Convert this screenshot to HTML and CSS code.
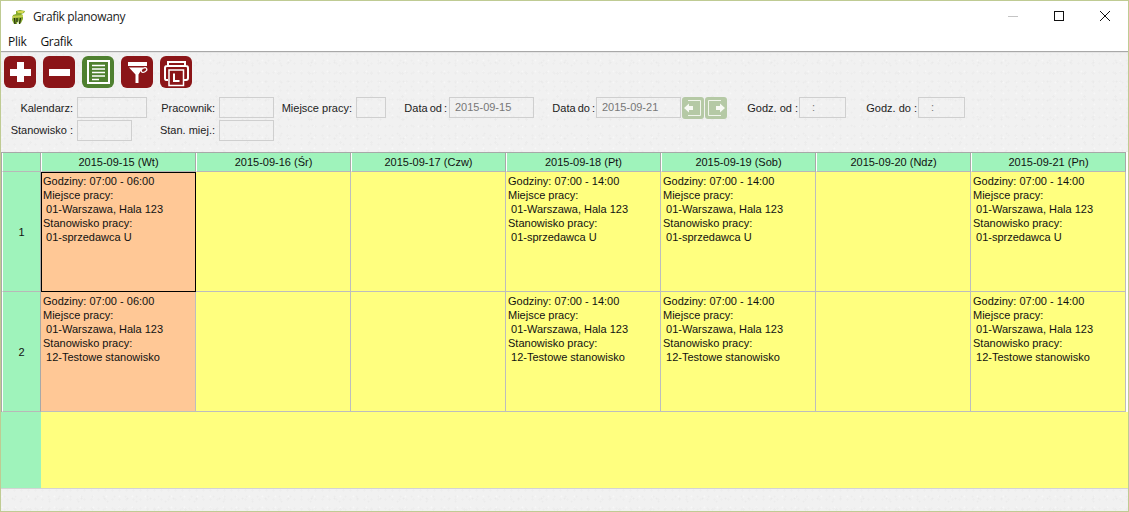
FILE: index.html
```html
<!DOCTYPE html>
<html lang="pl">
<head>
    <meta charset="UTF-8">
    <title>Grafik planowany</title>
    <link rel="stylesheet" href="styles.css">
</head>
<body>
    <div class="window">
        <!-- Pasek tytulu -->
        <div class="titlebar">
            <svg class="app-icon" width="16" height="16" viewBox="0 0 16 16">
                <path d="M3 6 L6 5 L6 2 L10 1 L15 2 L14 4 L11 5 L13 6 L13 10 L11 14 L9 15 L8 11 L7 15 L4 15 L2 11 Z" fill="#86ab2e"/>
                <path d="M7 2 L14 2 L13 4 L8 4 Z" fill="#d6d84e"/>
                <path d="M2 7 L13 6 L13 8 L3 9 Z" fill="#c4d050"/>
                <path d="M4.500 9 L5 15 M7 9 L7 13 M10.500 9 L9.500 15" stroke="#26340f" stroke-width="1.300" fill="none"/>
            </svg>
            <span class="title">Grafik planowany</span>
            <div class="win-buttons">
                <svg width="46" height="31" viewBox="0 0 46 31"><path d="M18 15.5 H28" stroke="#c4c4c4"/></svg>
                <svg width="46" height="31" viewBox="0 0 46 31"><rect x="18.5" y="10.5" width="9" height="9" fill="none" stroke="#111"/></svg>
                <svg width="46" height="31" viewBox="0 0 46 31"><path d="M18 10 L28 20 M28 10 L18 20" stroke="#111" fill="none"/></svg>
            </div>
        </div>

        <!-- Menu -->
        <div class="menu">
            <span>Plik</span>
            <span>Grafik</span>
        </div>

        <!-- Przyciski i filtry -->
        <div class="toolbar">
            <div class="tool-buttons">
                <svg class="tool red" viewBox="0 0 32 32"><path d="M13 6 H20 V13 H27 V20 H20 V26 H13 V20 H6 V13 H13 Z" fill="#fff"/></svg>
                <svg class="tool red" viewBox="0 0 32 32"><rect x="6" y="13" width="21" height="7" fill="#fff"/></svg>
                <svg class="tool green" viewBox="0 0 32 32">
                    <rect x="6" y="5" width="21" height="22" fill="none" stroke="#fff" stroke-width="2"/>
                    <path d="M10 9.500 H23 M10 13 H23 M10 16.500 H23 M10 20 H23 M10 23.500 H17" stroke="#fff" stroke-width="1.500"/>
                </svg>
                <svg class="tool red" viewBox="0 0 32 32">
                    <path d="M7 6 H26 V10 H7 Z M8 11.500 H22 L17.500 18.500 V27 H14.500 V18.500 Z" fill="#fff"/>
                    <ellipse cx="23" cy="14" rx="3" ry="2" transform="rotate(-30 23 14)" fill="#8b1518" stroke="#fff" stroke-width="1.200"/>
                </svg>
                <svg class="tool red" viewBox="0 0 32 32">
                    <path d="M8 10 V6 H25 V10 M8 24 H6 Q5 24 5 22 V12 Q5 10 7 10 H26 Q28 10 28 12 V22 Q28 24 26 24 H24" fill="none" stroke="#fff" stroke-width="2"/>
                    <rect x="9" y="14" width="14.500" height="15.500" fill="#8b1518" stroke="#fff" stroke-width="1.500"/>
                    <path d="M14 17.500 V25 H19.500" fill="none" stroke="#fff" stroke-width="2"/>
                </svg>
            </div>

            <div class="filter-row first">
                <label class="lbl w-kal">Kalendarz:</label>
                <div class="field w70"></div>
                <label class="lbl w-prac">Pracownik:</label>
                <div class="field w55"></div>
                <label class="lbl w-msc">Miejsce pracy:</label>
                <div class="field w30"></div>
                <label class="lbl w-od">Data od :</label>
                <div class="field w85 date">2015-09-15</div>
                <label class="lbl w-do">Data do :</label>
                <div class="field w85 date">2015-09-21</div>
                <svg class="arrow first-arrow" viewBox="0 0 22 22">
                    <rect width="22" height="22" rx="3" fill="#b5c9a5"/>
                    <path d="M6 3.500 H18.500 V18.500 H6" fill="none" stroke="#f1f5ec"/>
                    <path d="M2 11 L7 6.500 V9 H11 V13 H7 V15.500 Z" fill="#f7f9f3"/>
                </svg>
                <svg class="arrow" viewBox="0 0 22 22">
                    <rect width="22" height="22" rx="3" fill="#b5c9a5"/>
                    <path d="M16 3.500 H3.500 V18.500 H16" fill="none" stroke="#f1f5ec"/>
                    <path d="M20 11 L15 6.500 V9 H11 V13 H15 V15.500 Z" fill="#f7f9f3"/>
                </svg>
                <label class="lbl w-godz">Godz. od :</label>
                <div class="field w47 time">:</div>
                <label class="lbl w-godz2">Godz. do :</label>
                <div class="field w47 time">:</div>
            </div>
            <div class="filter-row">
                <label class="lbl w-kal">Stanowisko :</label>
                <div class="field w55"></div>
                <label class="lbl w-stan">Stan. miej.:</label>
                <div class="field w55"></div>
            </div>
        </div>

        <!-- Grafik -->
        <div class="schedule">
            <div class="corner"></div>
            <div class="day">2015-09-15 (Wt)</div>
            <div class="day">2015-09-16 (Śr)</div>
            <div class="day">2015-09-17 (Czw)</div>
            <div class="day">2015-09-18 (Pt)</div>
            <div class="day">2015-09-19 (Sob)</div>
            <div class="day">2015-09-20 (Ndz)</div>
            <div class="day">2015-09-21 (Pn)</div>

            <div class="row-no">1</div>
            <div class="cell orange selected">Godziny: 07:00 - 06:00<br>Miejsce pracy:<br>&nbsp;01-Warszawa, Hala 123<br>Stanowisko pracy:<br>&nbsp;01-sprzedawca U</div>
            <div class="cell"></div>
            <div class="cell"></div>
            <div class="cell">Godziny: 07:00 - 14:00<br>Miejsce pracy:<br>&nbsp;01-Warszawa, Hala 123<br>Stanowisko pracy:<br>&nbsp;01-sprzedawca U</div>
            <div class="cell">Godziny: 07:00 - 14:00<br>Miejsce pracy:<br>&nbsp;01-Warszawa, Hala 123<br>Stanowisko pracy:<br>&nbsp;01-sprzedawca U</div>
            <div class="cell"></div>
            <div class="cell">Godziny: 07:00 - 14:00<br>Miejsce pracy:<br>&nbsp;01-Warszawa, Hala 123<br>Stanowisko pracy:<br>&nbsp;01-sprzedawca U</div>

            <div class="row-no">2</div>
            <div class="cell orange">Godziny: 07:00 - 06:00<br>Miejsce pracy:<br>&nbsp;01-Warszawa, Hala 123<br>Stanowisko pracy:<br>&nbsp;12-Testowe stanowisko</div>
            <div class="cell"></div>
            <div class="cell"></div>
            <div class="cell">Godziny: 07:00 - 14:00<br>Miejsce pracy:<br>&nbsp;01-Warszawa, Hala 123<br>Stanowisko pracy:<br>&nbsp;12-Testowe stanowisko</div>
            <div class="cell">Godziny: 07:00 - 14:00<br>Miejsce pracy:<br>&nbsp;01-Warszawa, Hala 123<br>Stanowisko pracy:<br>&nbsp;12-Testowe stanowisko</div>
            <div class="cell"></div>
            <div class="cell">Godziny: 07:00 - 14:00<br>Miejsce pracy:<br>&nbsp;01-Warszawa, Hala 123<br>Stanowisko pracy:<br>&nbsp;12-Testowe stanowisko</div>
        </div>

        <div class="filler">
            <div class="filler-side"></div>
        </div>

        <div class="statusbar"></div>
    </div>
</body>
</html>
```

FILE: styles.css
```css
* {
    margin: 0;
    padding: 0;
    box-sizing: border-box;
}

body {
    font-family: "Liberation Sans", Arial, sans-serif;
    font-size: 11px;
    color: #111;
    background: #fff;
    overflow: hidden;
}

.window {
    width: 1129px;
    height: 512px;
    border: 1px solid #bfcb93;
    display: flex;
    flex-direction: column;
}

.titlebar {
    height: 31px;
    flex: none;
    display: flex;
    align-items: center;
    background: #fff;
    padding-left: 9px;
}

.app-icon {
    margin-right: 7px;
}

.title {
    font-family: "Open Sans", sans-serif;
    font-size: 12px;
    letter-spacing: -0.35px;
    color: #222;
}

.win-buttons {
    margin-left: auto;
    display: flex;
}

.menu {
    height: 20px;
    flex: none;
    display: flex;
    gap: 14px;
    padding: 1px 0 0 7px;
    font-family: "Open Sans", sans-serif;
    font-size: 12px;
    letter-spacing: -0.3px;
    line-height: 17px;
    background: #fff;
    border-bottom: 1px solid #a8a8a8;
}

.toolbar,
.statusbar {
    background-color: #f1f1f1;
    background-image:
        radial-gradient(circle, #e9e9e9 0.8px, transparent 1.2px),
        radial-gradient(circle, #ebebeb 0.8px, transparent 1.2px),
        radial-gradient(circle, #ececec 1px, transparent 1.4px),
        radial-gradient(circle, #ededed 0.8px, transparent 1.2px),
        radial-gradient(circle, #ececec 0.8px, transparent 1.2px),
        radial-gradient(circle, #f7f7f7 0.8px, transparent 1.2px);
    background-size: 23px 19px, 29px 17px, 31px 23px, 7px 9px, 11px 13px, 13px 11px;
    background-position: 0 0, 5px 4px, 14px 9px, 3px 6px, 9px 1px, 8px 2px;
}

.toolbar {
    height: 100px;
    flex: none;
    padding: 3px 0 0 3px;
    border-top: 1px solid #e4e4e4;
}

.tool-buttons {
    display: flex;
    gap: 7px;
    margin-bottom: 9px;
}

.tool {
    width: 32px;
    height: 32px;
    border-radius: 6px;
}

.tool.red {
    background: #8b1518;
}

.tool.green {
    background: #4f8030;
}

.filter-row {
    display: flex;
    align-items: center;
    height: 22px;
    margin-left: -3px;
}

.filter-row.first {
    height: 21px;
    margin-bottom: 1px;
}

.lbl {
    text-align: right;
    white-space: nowrap;
    flex: none;
    color: #222;
    margin-right: 4px;
}

.w-kal { width: 72px; }
.w-prac { width: 68px; }
.w-stan { width: 83px; }
.w-msc { width: 78px; }
.w-od { width: 61px; margin-right: 2px; word-spacing: -1px; }
.w-do { width: 61px; margin-right: 1px; word-spacing: -1px; }
.w-godz { width: 70px; margin-right: 1px; }
.w-godz2 { width: 71px; margin-right: 1px; }

.field {
    height: 21px;
    flex: none;
    border: 1px solid #cfcfcf;
    color: #777;
    line-height: 18px;
}

.w30 { width: 30px; }
.w47 { width: 47px; }
.w55 { width: 55px; }
.w70 { width: 70px; }
.w85 { width: 85px; }

.date {
    padding-left: 5px;
}

.time {
    padding-left: 12px;
}

.arrow {
    width: 22px;
    height: 22px;
    flex: none;
    margin-right: 1px;
}

.first-arrow {
    margin-left: 1px;
}

.schedule {
    flex: none;
    display: grid;
    grid-template-columns: 39px repeat(7, 155px);
    grid-template-rows: 19px 120px 120px;
    width: 1125px;
    border-top: 1px solid #a8a8a8;
    border-left: 1px solid #a8a8a8;
    background: #ffff7f;
}

.corner,
.day {
    background: #9ff3bb;
    border-right: 1px solid #a8a8a8;
    border-bottom: 1px solid #b8b8b8;
    border-left: 1px solid #fff;
}

.day {
    text-align: center;
    line-height: 18px;
    color: #111;
}

.row-no {
    background: #9ff3bb;
    border-left: 1px solid #fff;
    border-right: 1px solid #a8a8a8;
    border-bottom: 1px solid #b8b8b8;
    display: flex;
    align-items: center;
    justify-content: center;
}

.cell {
    background: #ffff7f;
    border-right: 1px solid #bdbdbd;
    border-bottom: 1px solid #bdbdbd;
    padding: 2px 0 0 2px;
    line-height: 14px;
    color: #111;
    white-space: nowrap;
    overflow: hidden;
}

.cell.orange {
    background: #ffc896;
}

.cell.selected {
    border: 1px solid #000;
    padding: 1px 0 0 1px;
}

.filler {
    flex: 1;
    background: #ffff7f;
}

.filler-side {
    width: 40px;
    height: 100%;
    background: #9ff3bb;
}

.statusbar {
    height: 23px;
    flex: none;
    border-top: 1px solid #d4d4d4;
}
```
